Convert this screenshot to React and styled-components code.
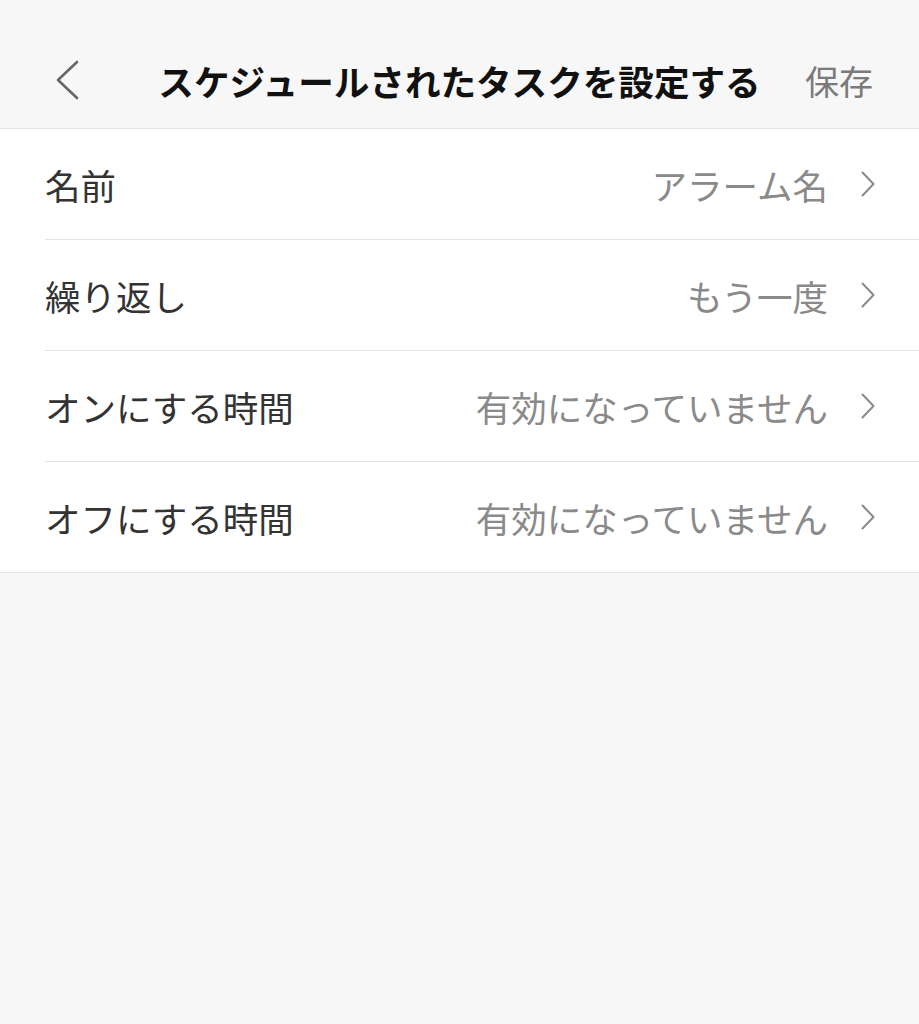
import React from "react";
import styled, { createGlobalStyle } from "styled-components";

const Global = createGlobalStyle`
  html, body { margin: 0; padding: 0; background: #f7f7f7; }
  body { font-family: "Noto Sans CJK JP", "Noto Sans", sans-serif; }
  * { box-sizing: border-box; }
`;

const Page = styled.div`
  min-height: 1024px;
  background: #f7f7f7;
`;

const Header = styled.header`
  display: grid;
  grid-template-columns: 1fr auto 1fr;
  align-items: center;
  height: 129px;
  padding-top: 32px;
  background: #f7f7f7;
  border-bottom: 1px solid #e3e3e3;
`;

const BackButton = styled.button`
  justify-self: start;
  margin-left: 52px;
  width: 30px;
  height: 44px;
  padding: 0;
  border: none;
  background: none;
  display: flex;
  align-items: center;
  justify-content: center;
`;

const Title = styled.h1`
  margin: 0;
  font-size: 35.6px;
  font-weight: 700;
  color: #111;
  white-space: nowrap;
`;

const SaveButton = styled.button`
  justify-self: end;
  margin-right: 46px;
  padding: 0;
  border: none;
  background: none;
  font-family: inherit;
  font-size: 34px;
  color: #7a7a7a;
`;

const List = styled.div`
  background: #fff;
  border-bottom: 1px solid #e3e3e3;
  padding-left: 45px;
`;

const Row = styled.div`
  display: flex;
  align-items: center;
  height: ${(p) => (p.$last ? 110 : 111)}px;
  padding-right: 44px;
  border-bottom: ${(p) => (p.$last ? "none" : "1px solid #e3e3e3")};
`;

const Label = styled.span`
  flex: 1;
  font-size: 35.5px;
  color: #333;
  white-space: nowrap;
`;

const Value = styled.span`
  font-size: 35.5px;
  color: #8a8a8a;
  white-space: nowrap;
  margin-right: 33px;
`;

const Chevron = () => (
  <svg width="14" height="26" viewBox="0 0 14 26" fill="none">
    <polyline points="1.5,1.5 12.5,13 1.5,24.5" stroke="#8a8a8a" strokeWidth="2" strokeLinecap="round" strokeLinejoin="round" />
  </svg>
);

const BackIcon = () => (
  <svg width="24" height="40" viewBox="0 0 24 40" fill="none">
    <polyline points="22,2 3,20 22,38" stroke="#666" strokeWidth="2.6" strokeLinecap="round" strokeLinejoin="round" />
  </svg>
);

const rows = [
  { label: "名前", value: "アラーム名" },
  { label: "繰り返し", value: "もう一度" },
  { label: "オンにする時間", value: "有効になっていません" },
  { label: "オフにする時間", value: "有効になっていません" },
];

export default function App() {
  return (
    <Page>
      <Global />
      <Header>
        <BackButton aria-label="back">
          <BackIcon />
        </BackButton>
        <Title>スケジュールされたタスクを設定する</Title>
        <SaveButton>保存</SaveButton>
      </Header>
      <List>
        {rows.map((r, i) => (
          <Row key={i} $last={i === rows.length - 1}>
            <Label>{r.label}</Label>
            <Value>{r.value}</Value>
            <Chevron />
          </Row>
        ))}
      </List>
    </Page>
  );
}
